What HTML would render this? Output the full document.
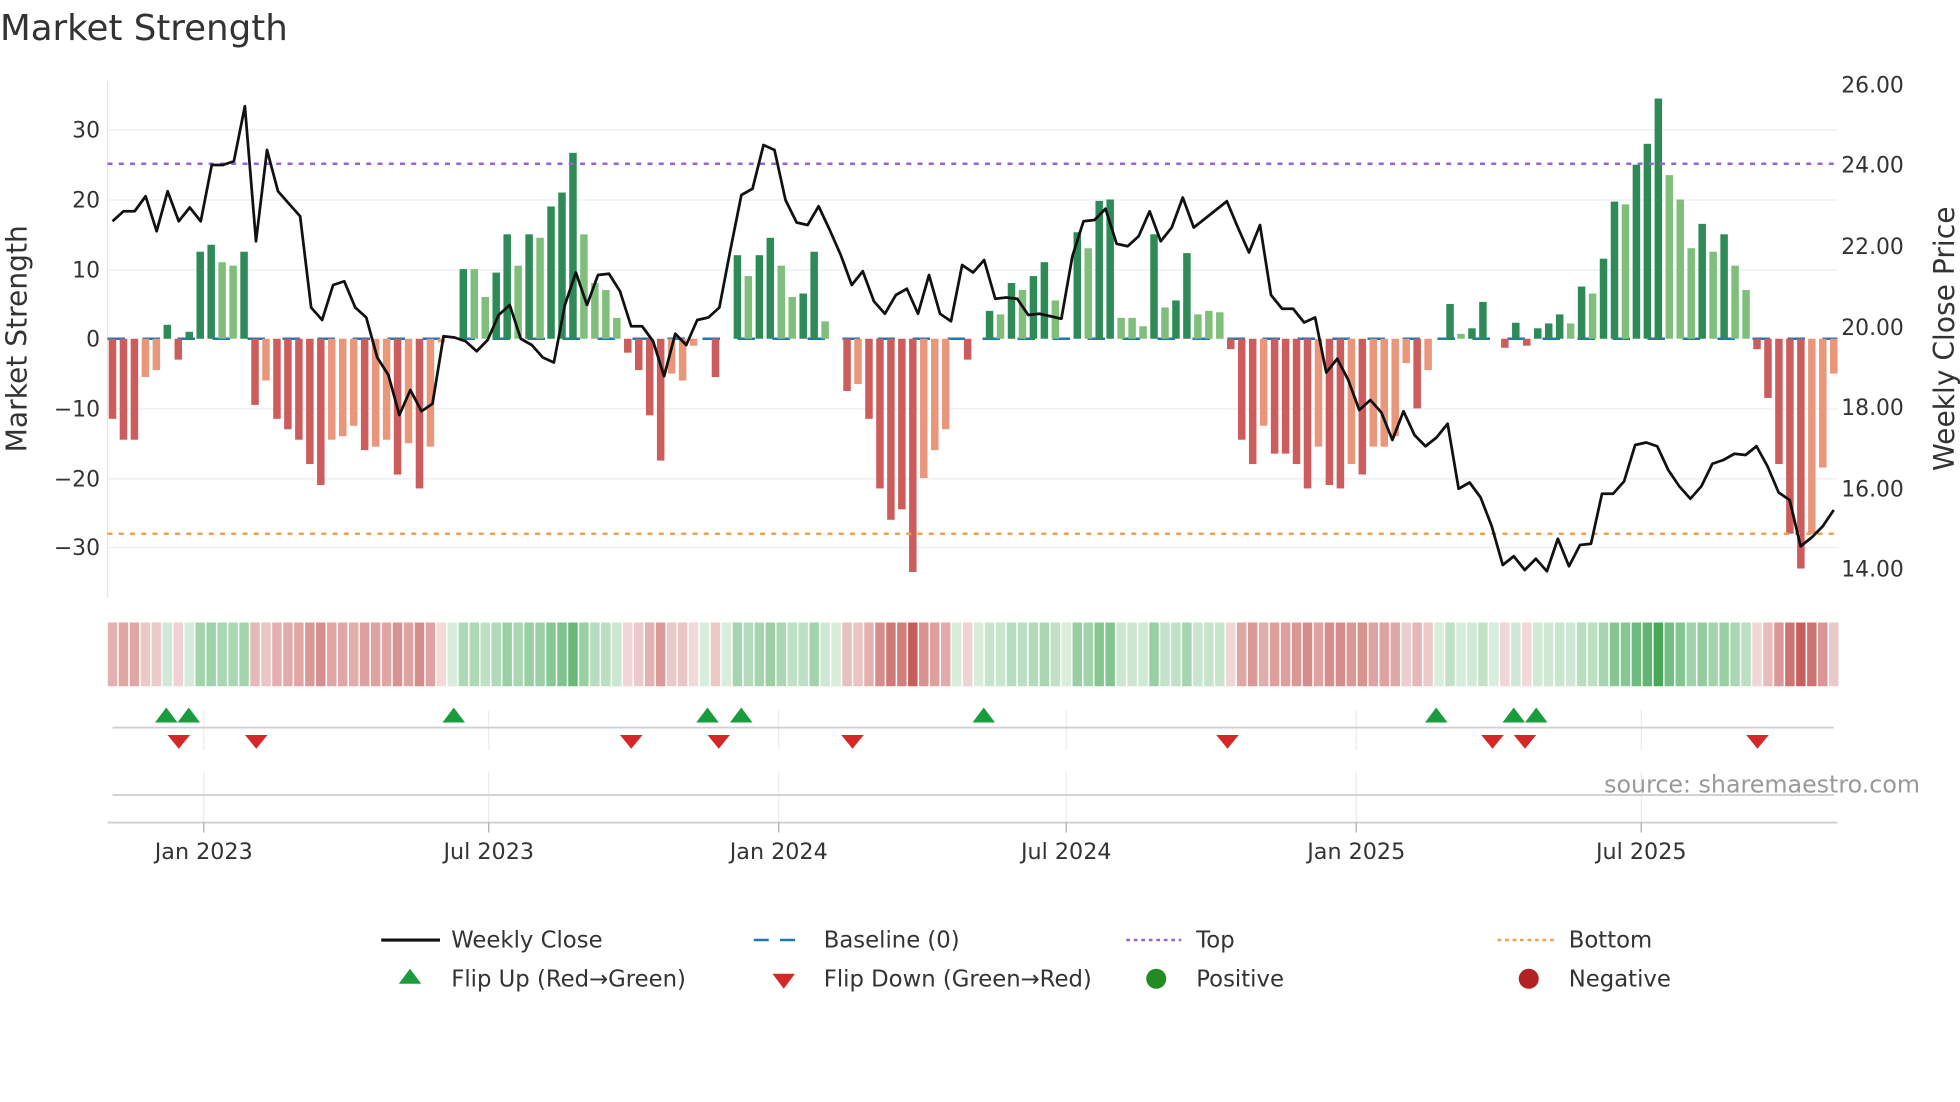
<!DOCTYPE html>
<html><head><meta charset="utf-8"><style>html,body{margin:0;padding:0;background:#fff;overflow:hidden}svg{display:block}text{font-family:"DejaVu Sans","Liberation Sans",sans-serif;fill:#333}</style></head>
<body>
<svg id="s" width="1960" height="1102" viewBox="0 0 1568 881.6" xmlns="http://www.w3.org/2000/svg">
<text x="0" y="32" font-size="28.5">Market Strength</text>
<g stroke="#eef0f2" stroke-width="1.2">
<line x1="86" x2="1470" y1="104" y2="104"/><line x1="86" x2="1470" y1="160" y2="160"/><line x1="86" x2="1470" y1="216" y2="216"/><line x1="86" x2="1470" y1="327" y2="327"/><line x1="86" x2="1470" y1="383" y2="383"/><line x1="86" x2="1470" y1="438" y2="438"/>
</g>
<line x1="86" x2="86" y1="65" y2="478" stroke="#e6e6e6" stroke-width="1"/>
<g font-size="17.5" text-anchor="end">
<text x="80" y="110">30</text><text x="80" y="166">20</text><text x="80" y="222">10</text><text x="80" y="277">0</text><text x="80" y="333">−10</text><text x="80" y="389">−20</text><text x="80" y="444">−30</text>
</g>
<g font-size="17.5">
<text x="1473" y="74">26.00</text><text x="1473" y="138">24.00</text><text x="1473" y="203">22.00</text><text x="1473" y="268">20.00</text><text x="1473" y="332">18.00</text><text x="1473" y="397">16.00</text><text x="1473" y="461">14.00</text>
</g>
<text transform="translate(21,271) rotate(-90)" font-size="22.5" text-anchor="middle">Market Strength</text>
<text transform="translate(1563,271) rotate(-90)" font-size="22.5" text-anchor="middle">Weekly Close Price</text>
<line x1="86" x2="1470" y1="271" y2="271" stroke="#1f77b4" stroke-width="2" stroke-dasharray="14,14"/>
<g id="bars"></g>
<line x1="86" x2="1470" y1="131" y2="131" stroke="#9467d0" stroke-width="2" stroke-dasharray="4,5"/>
<line x1="86" x2="1470" y1="427" y2="427" stroke="#f0a050" stroke-width="2" stroke-dasharray="4,5"/>
<polyline id="pl" fill="none" stroke="#111" stroke-width="2.2" stroke-linejoin="round"/>
<g id="heat"></g>
<g stroke="#e8ecef" stroke-width="1">
<line x1="163" x2="163" y1="568" y2="600"/><line x1="391" x2="391" y1="568" y2="600"/><line x1="623" x2="623" y1="568" y2="600"/><line x1="853" x2="853" y1="568" y2="600"/><line x1="1085" x2="1085" y1="568" y2="600"/><line x1="1313" x2="1313" y1="568" y2="600"/>
<line x1="163" x2="163" y1="618" y2="658"/><line x1="391" x2="391" y1="618" y2="658"/><line x1="623" x2="623" y1="618" y2="658"/><line x1="853" x2="853" y1="618" y2="658"/><line x1="1085" x2="1085" y1="618" y2="658"/><line x1="1313" x2="1313" y1="618" y2="658"/>
</g>
<line x1="90" x2="1467" y1="582" y2="582" stroke="#d0d0d0" stroke-width="1.5"/>
<line x1="90" x2="1467" y1="636" y2="636" stroke="#d0d0d0" stroke-width="1.5"/>
<line x1="86" x2="1470" y1="658" y2="658" stroke="#d0d0d0" stroke-width="1.5"/>
<g stroke="#aaa" stroke-width="1"><line x1="163" x2="163" y1="658" y2="666"/><line x1="391" x2="391" y1="658" y2="666"/><line x1="623" x2="623" y1="658" y2="666"/><line x1="853" x2="853" y1="658" y2="666"/><line x1="1085" x2="1085" y1="658" y2="666"/><line x1="1313" x2="1313" y1="658" y2="666"/></g>
<g id="flips"></g>
<g font-size="17.8" text-anchor="middle">
<text x="163" y="687">Jan 2023</text><text x="391" y="687">Jul 2023</text><text x="623" y="687">Jan 2024</text><text x="853" y="687">Jul 2024</text><text x="1085" y="687">Jan 2025</text><text x="1313" y="687">Jul 2025</text>
</g>
<text x="1536" y="634" font-size="19" text-anchor="end" style="fill:#999">source: sharemaestro.com</text>
<g font-size="18.2">
<line x1="305" x2="352" y1="752" y2="752" stroke="#111" stroke-width="2.5"/><text x="361" y="758">Weekly Close</text>
<line x1="603" x2="645" y1="752" y2="752" stroke="#1f77b4" stroke-width="2" stroke-dasharray="12,9"/><text x="659" y="758">Baseline (0)</text>
<line x1="901" x2="945" y1="752" y2="752" stroke="#9467d0" stroke-width="2" stroke-dasharray="3,3"/><text x="957" y="758">Top</text>
<line x1="1198" x2="1243" y1="752" y2="752" stroke="#f0a050" stroke-width="2" stroke-dasharray="3,3"/><text x="1255" y="758">Bottom</text>
<polygon points="319,787 337,787 328,775" fill="#1a9c3e"/><text x="361" y="789">Flip Up (Red→Green)</text>
<polygon points="618,779 636,779 627,791" fill="#d62728"/><text x="659" y="789">Flip Down (Green→Red)</text>
<circle cx="925" cy="783" r="8" fill="#228b22"/><text x="957" y="789">Positive</text>
<circle cx="1223" cy="783" r="8" fill="#b22222"/><text x="1255" y="789">Negative</text>
</g>
</svg>
<script>
var V=[[-11.5,1],[-14.5,1],[-14.5,1],[-5.5,0],[-4.5,0],[2,1],[-3,1],[1,1],[12.5,1],[13.5,1],[11,0],[10.5,0],[12.5,1],[-9.5,1],[-6,0],[-11.5,1],[-13,1],[-14.5,1],[-18,1],[-21,1],[-14.5,0],[-14,0],[-12.5,0],[-16,1],[-15.5,0],[-14.5,0],[-19.5,1],[-15,0],[-21.5,1],[-15.5,0],[-0.5,0],[0,1],[10,1],[10,0],[6,0],[9.5,1],[15,1],[10.5,0],[15,1],[14.5,0],[19,1],[21,1],[26.7,1],[15,0],[8,0],[7,0],[3,0],[-2,1],[-4.5,1],[-11,1],[-17.5,1],[-5,0],[-6,0],[-1,0],[0,1],[-5.5,1],[0,1],[12,1],[9,0],[12,1],[14.5,1],[10.5,0],[6,0],[6.5,1],[12.5,1],[2.5,0],[0,1],[-7.5,1],[-6.5,0],[-11.5,1],[-21.5,1],[-26,1],[-24.5,1],[-33.5,1],[-20,0],[-16,0],[-13,0],[0,1],[-3,1],[0,1],[4,1],[3.5,0],[8,1],[7,0],[9,1],[11,1],[5.5,0],[0,1],[15.3,1],[13,0],[19.8,1],[20,1],[3,0],[3,0],[1.8,0],[15,1],[4.5,0],[5.5,1],[12.3,1],[3.5,0],[4,0],[3.8,0],[-1.5,1],[-14.5,1],[-18,1],[-12.5,0],[-16.5,1],[-16.5,1],[-18,1],[-21.5,1],[-15.5,0],[-21,1],[-21.5,1],[-18,0],[-19.5,1],[-15.5,0],[-15.5,0],[-14,0],[-3.5,0],[-10,1],[-4.5,0],[0,1],[5,1],[0.7,0],[1.5,1],[5.3,1],[0,1],[-1.3,1],[2.3,1],[-1,1],[1.5,1],[2.2,1],[3.5,1],[2.2,0],[7.5,1],[6.5,0],[11.5,1],[19.7,1],[19.3,0],[25,1],[28,1],[34.5,1],[23.5,0],[20,0],[13,0],[16.5,1],[12.5,0],[15,1],[10.5,0],[7,0],[-1.5,1],[-8.5,1],[-18,1],[-28,1],[-33,1],[-28,0],[-18.5,0],[-5,0]];
var P=[177,169,169,157,185,153,177,166,177,132,132,129,85,193,120,153,163,173,246,256,228,225,246,254,286,300,332,312,329,323,269,270,273,281,272,252,244,271,276,286,290,244,218,244,220,219,233,261,261,273,301,267,276,256,254,246,200,156,151,116,120,160,178,180,165,184,204,228,217,241,251,236,231,251,220,251,257,212,218,208,239,238,239,252,251,253,255,205,177,176,167,195,197,189,169,193,182,158,182,175,168,161,182,202,180,236,247,247,258,254,298,287,304,328,320,330,352,329,348,357,350,339,391,386,398,421,452,445,456,447,457,431,453,436,435,395,395,385,356,354,357,376,389,399,389,371,368,363,364,357,373,394,400,437,430,421,408];
var N=V.length,x0=90,dx=(1467-90)/(N-1),ns="http://www.w3.org/2000/svg";
function el(p,t,a){var e=document.createElementNS(ns,t);for(var k in a)e.setAttribute(k,a[k]);p.appendChild(e);return e;}
var B=document.getElementById('bars'),H=document.getElementById('heat'),F=document.getElementById('flips');
for(var i=0;i<N;i++){var v=V[i][0],d=V[i][1],x=x0+i*dx;
 if(v!==0){var c=v>0?(d?'#2e8b57':'#7fbf7b'):(d?'#cd5c5c':'#e9967a');var y=271-v*5.57;
 el(B,'rect',{x:x-3,y:Math.min(y,271),width:6,height:Math.abs(271-y),fill:c});}
 var a=0.2+0.75*Math.min(Math.abs(v),35)/35;
 el(H,'rect',{x:x-dx/2+0.6,y:498,width:dx-1.2,height:51,fill:v>=0?'#3aa34f':'#c0504d','fill-opacity':a.toFixed(2)});
}
var pts=[];var M=P.length;for(var j=0;j<M;j++)pts.push((x0+j*(1377/(M-1))).toFixed(1)+','+P[j]);
document.getElementById('pl').setAttribute('points',pts.join(' '));
[133,151,363,566,593,787,1149,1211,1229].forEach(function(x){el(F,'polygon',{points:(x-9)+',578 '+(x+9)+',578 '+x+',566',fill:'#1a9c3e'});});
[143,205,505,575,682,982,1194,1220,1406].forEach(function(x){el(F,'polygon',{points:(x-9)+',588 '+(x+9)+',588 '+x+',599',fill:'#d62728'});});
</script>
</body></html>
